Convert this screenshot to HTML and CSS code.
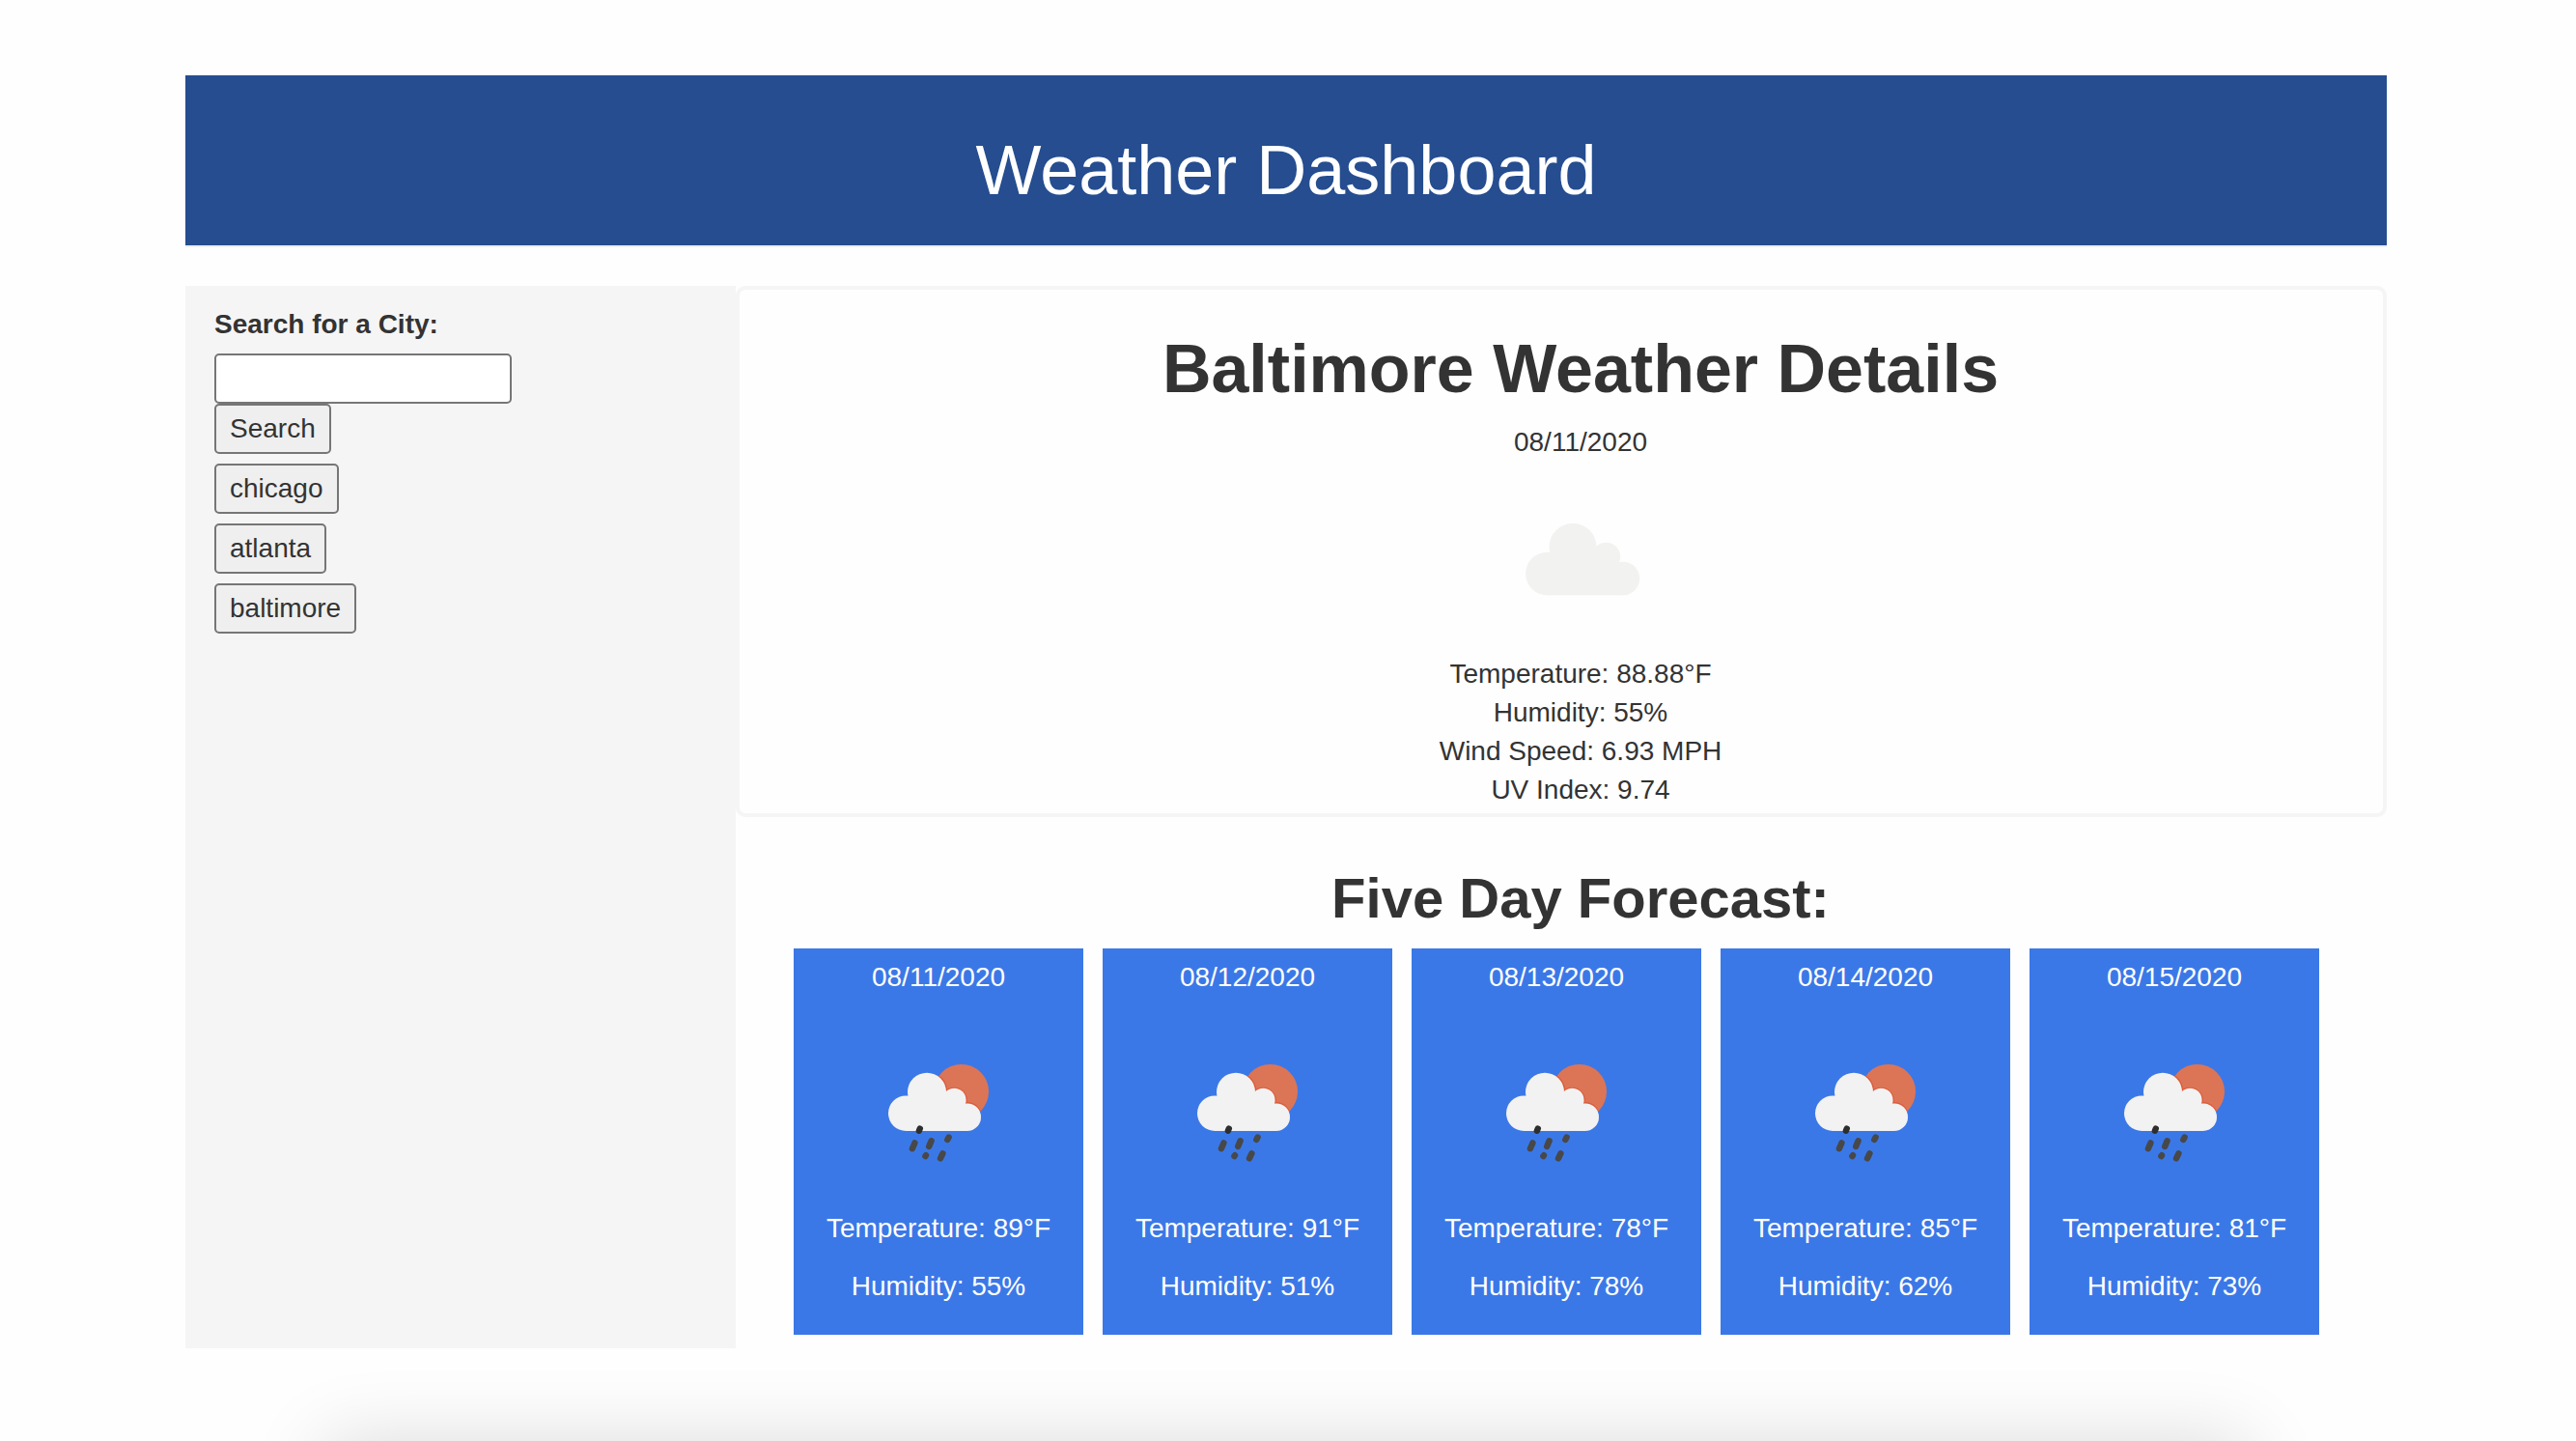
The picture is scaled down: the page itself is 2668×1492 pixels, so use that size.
FILE: index.html
```html
<!DOCTYPE html>
<html lang="en">
<head>
<meta charset="utf-8">
<title>Weather Dashboard</title>
<link rel="stylesheet" href="styles.css">
</head>
<body>
<svg class="defs" aria-hidden="true">
  <clipPath id="sun-area"><circle cx="123.7" cy="98.2" r="28.3"/></clipPath>
  <symbol id="rain" viewBox="0 0 200 200">
    <circle cx="123.7" cy="98.2" r="28.3" fill="#dc7556"/>
    <g fill="#dc5b3b" clip-path="url(#sun-area)">
      <circle cx="88" cy="98.7" r="21.4"/>
      <circle cx="116.3" cy="107.3" r="13.6"/>
      <circle cx="129.7" cy="124.7" r="15.6"/>
    </g>
    <g fill="#f2f2f2">
      <circle cx="88" cy="98.7" r="20"/>
      <circle cx="66.3" cy="120.7" r="18.3"/>
      <circle cx="116.3" cy="107" r="12.3"/>
      <circle cx="129.7" cy="124.7" r="14.3"/>
      <path d="M66 139V115L74 96L100 106L118 102L130 122V139Z"/>
    </g>
    <g stroke="#484848" stroke-width="6.4" stroke-linecap="round">
      <path d="M79.9 138.7L80.8 136.6" stroke="#2e2e2e"/>
      <path d="M72.9 157.2L75.4 151.4M90.2 155L92.6 149.2M109.3 148L110.6 145.6M86.4 165.1L87 164.2M102 167.3L104.4 162.3"/>
    </g>
  </symbol>
  <symbol id="cloud" viewBox="0 0 200 200">
    <g fill="#f2f2f0">
      <circle cx="92" cy="88.3" r="24.5"/>
      <circle cx="65.3" cy="116" r="22.2"/>
      <circle cx="126.5" cy="98.5" r="14.7"/>
      <circle cx="144" cy="121" r="17.2"/>
      <path d="M65 138.2V112L75 94L110 98L130 96L144 118V138.2Z"/>
    </g>
  </symbol>
</svg>
<div class="page">
  <header class="banner"><h1>Weather Dashboard</h1></header>
  <div class="layout">
    <aside class="sidebar">
      <form class="search">
        <label for="city">Search for a City:</label>
        <input id="city" type="text">
        <button type="button">Search</button>
      </form>
      <div class="history">
        <button type="button">chicago</button>
        <button type="button">atlanta</button>
        <button type="button">baltimore</button>
      </div>
    </aside>
    <main class="content">
      <section class="details">
        <h2>Baltimore Weather Details</h2>
        <p>08/11/2020</p>
        <svg class="icon" role="img" aria-label="Cloudy"><use href="#cloud"/></svg>
        <p>Temperature: 88.88°F</p>
        <p>Humidity: 55%</p>
        <p>Wind Speed: 6.93 MPH</p>
        <p>UV Index: 9.74</p>
      </section>
      <section class="forecast">
        <h3>Five Day Forecast:</h3>
        <div class="cards">
          <article class="card"><p>08/11/2020</p><svg class="icon" role="img" aria-label="Rain"><use href="#rain"/></svg><p>Temperature: 89°F</p><p>Humidity: 55%</p></article>
          <article class="card"><p>08/12/2020</p><svg class="icon" role="img" aria-label="Rain"><use href="#rain"/></svg><p>Temperature: 91°F</p><p>Humidity: 51%</p></article>
          <article class="card"><p>08/13/2020</p><svg class="icon" role="img" aria-label="Rain"><use href="#rain"/></svg><p>Temperature: 78°F</p><p>Humidity: 78%</p></article>
          <article class="card"><p>08/14/2020</p><svg class="icon" role="img" aria-label="Rain"><use href="#rain"/></svg><p>Temperature: 85°F</p><p>Humidity: 62%</p></article>
          <article class="card"><p>08/15/2020</p><svg class="icon" role="img" aria-label="Rain"><use href="#rain"/></svg><p>Temperature: 81°F</p><p>Humidity: 73%</p></article>
        </div>
      </section>
    </main>
  </div>
  <div class="shade"></div>
</div>
</body>
</html>
```
FILE: styles.css
```css
* { box-sizing: border-box; }

body {
  margin: 0;
  background: #fefefe;
  color: #333;
  font: 28px/40px "Helvetica Neue", "Liberation Sans", Arial, sans-serif;
}

h1, h2, h3, p { margin: 0; }

.defs { display: block; width: 0; height: 0; }

.page {
  min-height: 100vh;
  padding: 78px 196px 0 192px;
  overflow: hidden;
}

.banner {
  padding: 58px 0 38px;
  border-bottom: 2px solid #eee;
  background: #254d8f;
  background-clip: padding-box;
  color: #fff;
  text-align: center;
}

.banner h1 {
  font-size: 72px;
  font-weight: 400;
  line-height: 80px;
}

.layout {
  display: grid;
  grid-template-columns: 1fr 3fr;
  margin-top: 40px;
}

.sidebar {
  padding: 20px 30px;
  background: #f5f5f5;
}

.search, .history {
  display: flex;
  flex-direction: column;
  align-items: flex-start;
}

.history { gap: 10px; margin-top: 10px; }

.search label { margin-bottom: 10px; font-weight: 700; }

.search input, button {
  height: 52px;
  border: 2px solid #767676;
  border-radius: 5px;
  color: inherit;
  font: inherit;
}

.search input { width: 308px; padding: 0 4px; background: #fff; }

button { padding: 0 14px; background: #efefef; }

.content {
  min-width: 0;
  padding-bottom: 14px;
  text-align: center;
}

.details {
  padding: 42px 0 4px 40px;
  border: 4px solid #f5f5f5;
  border-radius: 10px;
}

.details h2 {
  margin-bottom: 16px;
  font-size: 70px;
  line-height: 80px;
}

.icon { display: block; width: 200px; height: 200px; margin: 0 auto; }

.forecast h3 {
  margin: 52px 0 20px;
  padding-left: 40px;
  font-size: 58px;
  line-height: 64px;
}

.cards {
  display: grid;
  grid-template-columns: repeat(5, 1fr);
  gap: 20px;
  padding: 0 70px 0 60px;
}

.card {
  padding: 10px 10px 30px;
  background: #3b78e7;
  color: #fff;
}

.card .icon ~ p { margin-top: 20px; }

.shade {
  height: 200px;
  margin: 96px 144px -200px 144px;
  box-shadow: 0 0 80px rgba(0, 0, 0, 0.14);
}
```
